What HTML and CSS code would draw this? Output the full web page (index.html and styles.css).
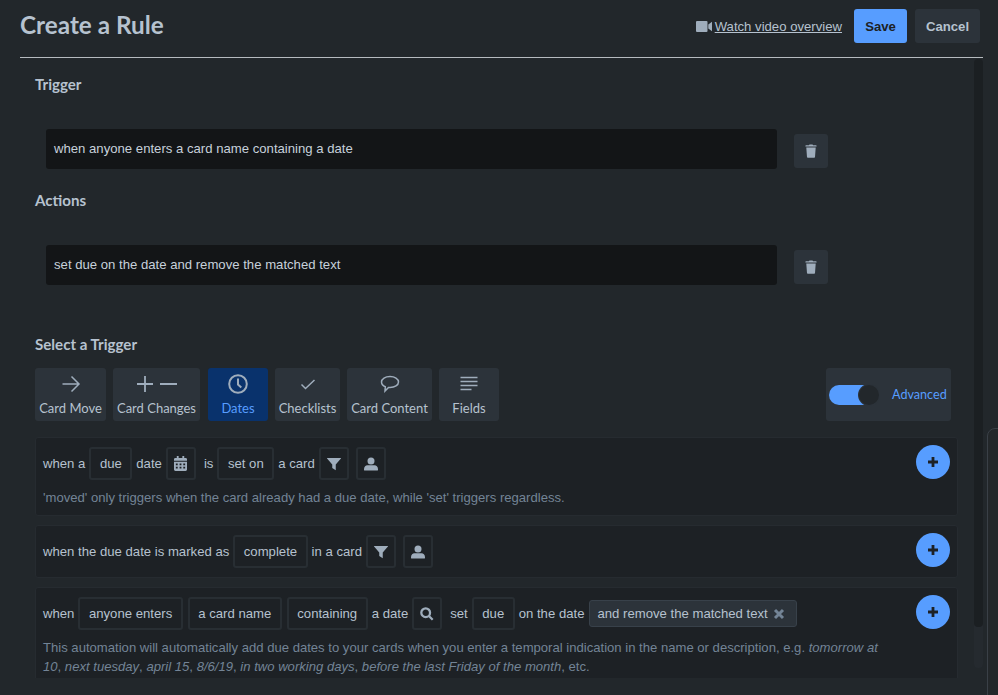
FILE: index.html
```html
<!DOCTYPE html>
<html lang="en">
<head>
<meta charset="utf-8">
<title>Create a Rule</title>
<link rel="stylesheet" href="styles.css">
</head>
<body>
<div class="page">
  <header class="head">
    <h1 class="title">Create a Rule</h1>
    <div class="head-actions">
      <svg class="video-icon" viewBox="0 0 16 11"><path d="M0 1a1 1 0 0 1 1-1h9.500a1 1 0 0 1 1 1v9a1 1 0 0 1-1 1H1a1 1 0 0 1-1-1zM12.300 3.500 16 .8v9.400l-3.700-2.700z"/></svg>
      <a class="video-link" href="#">Watch video overview</a>
      <button class="btn btn-save">Save</button>
      <button class="btn btn-cancel">Cancel</button>
    </div>
  </header>
  <div class="body">
    <main class="scroll">
      <h2 class="sec sec-trigger">Trigger</h2>
      <div class="pick-row pick-first">
        <div class="pick">when anyone enters a card name containing a date</div>
        <button class="trash"><svg viewBox="0 0 14 16"><path d="M1 1.300h3.600L5.200.3h3.600l.6 1h3.600a.5.5 0 0 1 .5.5v.9H.5v-.9a.5.5 0 0 1 .5-.5zM1.500 3.800h11l-.8 11a1 1 0 0 1-1 1H3.300a1 1 0 0 1-1-1z"/></svg></button>
      </div>
      <h2 class="sec sec-actions">Actions</h2>
      <div class="pick-row">
        <div class="pick">set due on the date and remove the matched text</div>
        <button class="trash"><svg viewBox="0 0 14 16"><path d="M1 1.300h3.600L5.200.3h3.600l.6 1h3.600a.5.5 0 0 1 .5.5v.9H.5v-.9a.5.5 0 0 1 .5-.5zM1.500 3.800h11l-.8 11a1 1 0 0 1-1 1H3.300a1 1 0 0 1-1-1z"/></svg></button>
      </div>
      <h2 class="sec sec-select">Select a Trigger</h2>
      <div class="tabs-row">
        <div class="tabs">
          <div class="tab tab-move"><svg viewBox="0 0 20 20"><path d="M1.500 10h16.500M10.500 2.500 18 10l-7.500 7.500"/></svg><span>Card Move</span></div>
          <div class="tab tab-changes"><svg class="wide" viewBox="0 0 40 20"><path d="M0 10h16M8 2v16M23 10h17"/></svg><span>Card Changes</span></div>
          <div class="tab tab-dates active"><svg viewBox="0 0 20 20"><circle cx="10" cy="10" r="8.800"/><path d="M10 4.500V10.500l3.300 3"/></svg><span>Dates</span></div>
          <div class="tab tab-check"><svg viewBox="0 0 20 20"><path d="m3.500 10.500 4 4 9-8.500"/></svg><span>Checklists</span></div>
          <div class="tab tab-content"><svg viewBox="0 0 20 20"><path d="M10 2.500c4.700 0 8.500 2.300 8.500 5.500s-3.800 5.500-8.500 5.500h-1.500L5 17l.3-4.300C3 11.800 1.500 10.100 1.500 8c0-3.200 3.800-5.500 8.500-5.500z"/></svg><span>Card Content</span></div>
          <div class="tab tab-fields"><svg viewBox="0 0 20 20"><path d="M1.500 3.500h17M1.500 7.500h17M1.500 11.500h17M1.500 15.500h11"/></svg><span>Fields</span></div>
        </div>
        <div class="advanced">
          <span class="switch"><span class="knob"></span></span>
          <span class="adv-label">Advanced</span>
        </div>
      </div>

      <section class="rule">
        <div class="line">
          <span>when a</span><span class="opt">due</span><span>date</span>
          <span class="opt opt-icon"><svg class="cal" viewBox="0 0 14 16"><path d="M3 0h2v2h4V0h2v2h1.500A1.500 1.500 0 0 1 14 3.500V5H0V3.500A1.500 1.500 0 0 1 1.500 2H3zM0 6h14v8.500a1.500 1.500 0 0 1-1.500 1.500h-11A1.500 1.500 0 0 1 0 14.500zm2 2v2h2V8zm4 0v2h2V8zm4 0v2h2V8zm-8 3.500v2h2v-2zm4 0v2h2v-2zm4 0v2h2v-2z" fill-rule="evenodd"/></svg></span>
          <span>is</span><span class="opt">set on</span><span>a card</span>
          <span class="opt opt-icon"><svg viewBox="0 0 16 16"><path d="M.5 1h15a.5.5 0 0 1 .4.800L10 8.500V15l-4-2.500v-4L.1 1.800A.5.5 0 0 1 .5 1z"/></svg></span>
          <span class="opt opt-icon"><svg viewBox="0 0 16 16"><circle cx="8" cy="4.500" r="4"/><path d="M0 14c0-3 2-4.500 4-4.500h8c2 0 4 1.500 4 4.500v.500a1 1 0 0 1-1 1H1a1 1 0 0 1-1-1z"/></svg></span>
        </div>
        <p class="note">'moved' only triggers when the card already had a due date, while 'set' triggers regardless.</p>
        <button class="add"><svg viewBox="0 0 12 12"><path d="M6 1v10M1 6h10"/></svg></button>
      </section>

      <section class="rule">
        <div class="line">
          <span>when the due date is marked as</span><span class="opt">complete</span><span>in a card</span>
          <span class="opt opt-icon"><svg viewBox="0 0 16 16"><path d="M.5 1h15a.5.5 0 0 1 .4.800L10 8.500V15l-4-2.500v-4L.1 1.800A.5.5 0 0 1 .5 1z"/></svg></span>
          <span class="opt opt-icon"><svg viewBox="0 0 16 16"><circle cx="8" cy="4.500" r="4"/><path d="M0 14c0-3 2-4.500 4-4.500h8c2 0 4 1.500 4 4.500v.500a1 1 0 0 1-1 1H1a1 1 0 0 1-1-1z"/></svg></span>
        </div>
        <button class="add"><svg viewBox="0 0 12 12"><path d="M6 1v10M1 6h10"/></svg></button>
      </section>

      <section class="rule rule-last">
        <div class="line">
          <span>when</span><span class="opt">anyone enters</span><span class="opt">a card name</span><span class="opt">containing</span><span>a date</span>
          <span class="opt opt-icon"><svg viewBox="0 0 16 16"><path class="ring" d="M6.500 1.500a5 5 0 1 1 0 10 5 5 0 0 1 0-10zM10.500 10.500 14.500 14.500"/></svg></span>
          <span>set</span><span class="opt">due</span><span>on the date</span>
          <span class="chip"><span>and remove the matched text</span><svg viewBox="0 0 12 12"><path d="M2 2l8 8M10 2l-8 8"/></svg></span>
        </div>
        <p class="note">This automation will automatically add due dates to your cards when you enter a temporal indication in the name or description, e.g. <em>tomorrow at</em><br><em>10</em>, <em>next tuesday</em>, <em>april 15</em>, <em>8/6/19</em>, <em>in two working days</em>, <em>before the last Friday of the month</em>, etc.</p>
        <button class="add"><svg viewBox="0 0 12 12"><path d="M6 1v10M1 6h10"/></svg></button>
      </section>
    </main>
    <div class="scrollbar"><div class="thumb"></div></div>
  </div>
  <aside class="peek"></aside>
</div>
</body>
</html>
```

FILE: styles.css
```css
* { box-sizing: border-box; }
html, body { margin: 0; height: 100%; }
body {
  background: #22272b;
  color: #b6c2cf;
  font-family: "Liberation Sans", Arial, sans-serif;
  font-size: 13.15px;
  overflow: hidden;
}
.page { width: 998px; height: 695px; position: relative; overflow: hidden; padding: 0 15px 0 20px; }
.head {
  height: 58px;
  display: flex;
  align-items: flex-start;
  justify-content: space-between;
  border-bottom: 1px solid #b6bbbf;
}
.title {
  margin: 9px 0 0;
  font: 700 24.3px/32px Lato, sans-serif;
  color: #b6c2cf;
}
.head-actions { display: flex; align-items: center; height: 34px; margin-top: 9px; padding-right: 3px; }
.video-icon { width: 16px; height: 11px; fill: #9fadbc; margin-right: 3px; }
.video-link { color: #b6c2cf; margin-right: 12px; }
.btn {
  border: 0; height: 34px; border-radius: 3px; padding: 0;
  font: 700 13.15px "Liberation Sans", Arial, sans-serif;
}
.btn-save { width: 53px; background: #579dff; color: #1d2125; margin-right: 8px; }
.btn-cancel { width: 65px; background: #2c333a; color: #b6c2cf; }
.body { display: flex; height: 637px; }
.scroll { flex: 0 0 954px; padding: 0 15px; height: 620px; overflow: hidden; }
.scrollbar { width: 9px; height: 609px; background: #252a2f; border-radius: 4px; margin-top: 1px; }
.thumb { height: 568px; background: #1b1f22; border-radius: 4px; }
.sec { margin: 0; font: 700 15.1px/20px Lato, sans-serif; color: #b6c2cf; }
.sec-trigger { padding-top: 16px; }
.sec-actions { padding-top: 5px; }
.sec-select { padding-top: 39px; }
.pick-row { display: flex; align-items: flex-start; padding: 35px 0 0 11px; height: 85px; }
.pick-first { height: 91px; }
.pick {
  width: 731px; height: 40px; background: #131517; border-radius: 3px;
  color: #c7d1db; padding: 0 8px; line-height: 40px;
}
.trash {
  margin: 5px 0 0 17px; width: 34px; height: 34px; border: 0; border-radius: 3px;
  background: #2c333a; display: flex; align-items: center; justify-content: center; padding: 0;
}
.trash svg { width: 12px; height: 14px; fill: #9fadbc; }
.tabs-row { display: flex; justify-content: space-between; margin-top: 14px; padding-right: 8px; }
.tabs { display: flex; gap: 7px; }
.tab {
  height: 53px; background: #2c333a; border-radius: 3px;
  display: flex; flex-direction: column; align-items: center; justify-content: flex-end;
  padding-bottom: 5px; color: #b6c2cf; font: 400 13px/16px Lato, sans-serif; position: relative;
}
.tab svg { width: 20px; height: 20px; position: absolute; top: 6px; fill: none; stroke: #9fadbc; stroke-width: 1.500; }
.tab svg.wide { width: 40px; stroke-width: 1.800; }
.tab-move { width: 71px; }
.tab-changes { width: 87px; }
.tab-dates { width: 60px; margin-left: 1px; }
.tab-check { width: 65px; }
.tab-content { width: 85px; }
.tab-fields { width: 60px; }
.tab.active { background: #09326c; color: #579dff; }
.tab-dates svg { stroke-width: 2; }
.advanced {
  width: 125px; height: 53px; background: #2c333a; border-radius: 3px;
  display: flex; align-items: center; padding-left: 3px;
}
.switch { width: 50px; height: 20px; background: #579dff; border-radius: 10px; position: relative; margin-right: 13px; }
.knob { position: absolute; right: 0; top: 0; width: 20px; height: 20px; background: #22272b; border-radius: 50%; box-shadow: 0 0 0 1px #2c333a; }
.adv-label { color: #579dff; font: 400 12.6px Lato, sans-serif; }
.rule {
  position: relative;
  width: 923px;
  margin-top: 9px;
  padding: 9px 7px;
  background: #1d2125;
  border: 1px solid #262b30;
  border-radius: 3px;
  line-height: 17px;
}
.tabs-row + .rule { margin-top: 16px; }
.line { display: flex; align-items: center; gap: 4px; min-height: 33px; color: #b6c2cf; }
.opt {
  height: 33px; padding: 0 8.500px; border: 2px solid #282e33; border-radius: 3px;
  display: inline-flex; align-items: center; color: #b6c2cf;
}
.opt + .opt { margin-left: 1px; }
.opt-icon { width: 30px; padding: 0; justify-content: center; margin-right: 4px; }
.opt-icon + .opt-icon { margin-left: -1px; }
.opt-icon svg { width: 14px; height: 14px; fill: #9fadbc; }
.opt-icon svg.cal { width: 13px; height: 15px; }
.ring { fill: none; stroke: #9fadbc; stroke-width: 2.600; }
.chip {
  height: 27px; padding: 0 11px 0 7px; background: #2c333a; border: 1px solid #38414a; border-radius: 3px;
  display: inline-flex; align-items: center; gap: 5px; color: #b6c2cf; margin-left: 1px;
}
.chip svg { width: 12px; height: 12px; fill: none; stroke: #738496; stroke-width: 3; }
.note { margin: 8px 0 -1px; color: #738496; font-size: 13.1px; line-height: 19px; }
.add {
  position: absolute; right: 7px; top: 7px; width: 34px; height: 34px; border-radius: 50%;
  background: #579dff; border: 0; padding: 0; display: flex; align-items: center; justify-content: center;
}
.add svg { width: 12px; height: 12px; fill: none; stroke: #1d2125; stroke-width: 2.800; }
.rule-last { height: 110px; }
.peek {
  position: absolute; left: 987px; top: 428px; width: 40px; height: 300px;
  background: #23272a; border: 1px solid #3a4047; border-radius: 8px;
}
```
